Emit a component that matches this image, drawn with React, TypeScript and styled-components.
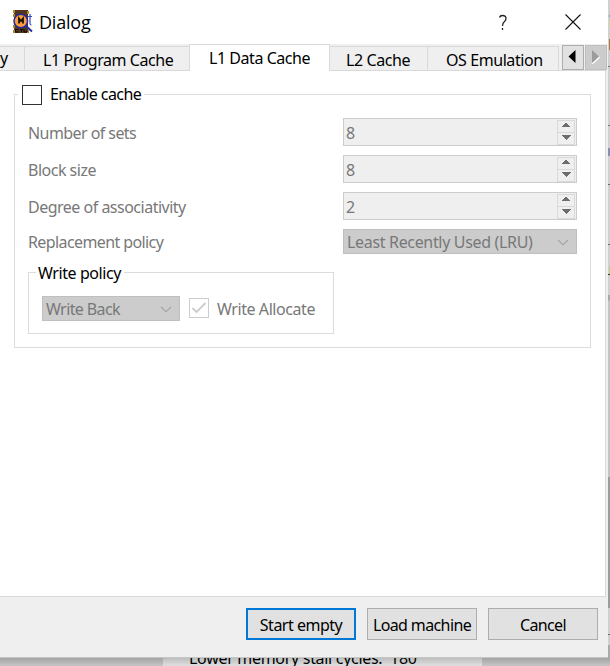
import React from "react";
import styled, { createGlobalStyle, css } from "styled-components";

const GlobalStyle = createGlobalStyle`
  *, *::before, *::after { box-sizing: border-box; }
  body { margin: 0; overflow: hidden; background: #c4c4c4; }
`;

const Desktop = styled.div`
  display: grid;
  grid-template-columns: 608px 2px;
  grid-template-rows: 658px 8px;
  width: 610px;
  height: 666px;
  overflow: hidden;
  font: 16px/22px "Noto Sans", sans-serif;
  color: #000;
`;

const Window = styled.main`
  display: flex;
  flex-direction: column;
  background: #efefef;
`;

const Text = styled.span<{ $track?: number }>`
  white-space: pre;
  letter-spacing: ${({ $track = -0.5 }) => $track}px;
`;

const TitleBar = styled.header`
  display: flex;
  align-items: center;
  height: 44px;
  padding: 0 27px 0 12px;
  background: #fff;
`;

const Title = styled.h1`
  flex: 1;
  margin: 0 0 0 5px;
  font: 400 18px/24px "Open Sans", sans-serif;
  letter-spacing: -0.2px;
`;

const TitleButton = styled.button`
  display: flex;
  padding: 0;
  border: 0;
  background: none;
  & + & { margin-left: 57px; }
`;

const TabBar = styled.nav`
  display: flex;
  align-items: flex-end;
  height: 27px;
  background: linear-gradient(#d9d9d9, #d9d9d9) 0 100% / 606px 1px no-repeat, #efefef;
`;

const Tab = styled.div<{ $width: number; $inset: number; $active?: boolean }>`
  width: ${({ $width }) => $width}px;
  height: 25px;
  padding: 2px 0 0 ${({ $inset }) => $inset}px;
  border: 1px solid #d9d9d9;
  border-left: 0;
  overflow: hidden;
  ${({ $active }) =>
    $active &&
    css`
      height: 27px;
      border-left: 1px solid #d9d9d9;
      border-bottom: 0;
      margin-left: -1px;
      background: #fff;
    `}
`;

const ScrollButton = styled.button<{ $disabled?: boolean }>`
  display: flex;
  align-items: center;
  justify-content: center;
  width: 22px;
  height: 25px;
  margin: 0 0 1px ${({ $disabled }) => ($disabled ? 1 : 3)}px;
  padding: 0 2px 2px 0;
  border: 1px solid ${({ $disabled }) => ($disabled ? "#bfbfbf" : "#adadad")};
  background: ${({ $disabled }) => ($disabled ? "#ccc" : "#e1e1e1")};
`;

const Pane = styled.section`
  width: 606px;
  height: 526px;
  padding: 23px 14px 0;
  border: solid #d9d9d9;
  border-width: 0 1px 1px 0;
  background: #fff;
`;

const CacheGroup = styled.div`
  position: relative;
  width: 577px;
  height: 254px;
  padding: 23px 13px 0;
  border: 1px solid #dcdcdc;
`;

const Legend = styled.label<{ $left: number; $top: number; $width: number; $pad: number }>`
  position: absolute;
  top: ${({ $top }) => $top}px;
  left: ${({ $left }) => $left}px;
  display: flex;
  align-items: flex-end;
  gap: 8px;
  width: ${({ $width }) => $width}px;
  padding-left: ${({ $pad }) => $pad}px;
  background: #fff;
`;

const CheckBox = styled.span<{ $disabled?: boolean }>`
  display: flex;
  align-items: center;
  justify-content: center;
  flex: none;
  width: 20px;
  height: 20px;
  border: 1px solid ${({ $disabled }) => ($disabled ? "#ccc" : "#333")};
  background: #fff;
`;

const Form = styled.div`
  display: grid;
  grid-template-columns: 315px 234px;
  grid-template-rows: 28px 28px 28px 25px;
  row-gap: 9px;
  align-items: center;
  color: #787878;
`;

const FieldLabel = styled(Text)`
  padding-top: 2px;
`;

const SpinBox = styled.div`
  display: flex;
  align-items: center;
  justify-content: space-between;
  height: 28px;
  padding: 1px 1px 1px 2px;
  border: 1px solid #ccc;
  background: #efefef;
`;

const SpinButtons = styled.div`
  display: grid;
  grid-template-rows: 12px 11px;
  width: 18px;
  border: 1px solid #d9d9d9;
  svg { display: block; }
  > :first-child { border-bottom: 1px solid #d9d9d9; }
`;

const ComboBox = styled.div<{ $width: number }>`
  display: flex;
  align-items: center;
  justify-content: space-between;
  width: ${({ $width }) => $width}px;
  height: 25px;
  padding: 1px 7px 0 3px;
  border: 1px solid #bfbfbf;
  background: #ccc;
  color: #787878;
`;

const WriteGroup = styled.div`
  position: relative;
  display: flex;
  align-items: flex-start;
  width: 306px;
  height: 62px;
  margin-top: 18px;
  padding: 23px 0 0 13px;
  border: 1px solid #dcdcdc;
`;

const CheckRow = styled.label`
  display: flex;
  align-items: center;
  gap: 8px;
  height: 24px;
  margin-left: 9px;
  color: #787878;
`;

const Footer = styled.footer`
  display: flex;
  justify-content: flex-end;
  gap: 11px;
  flex: 1;
  padding: 11px 10px 0;
  border-bottom: 1px solid #c6c6c6;
`;

const PushButton = styled.button<{ $primary?: boolean }>`
  width: 110px;
  height: 32px;
  padding: 1px 0 0;
  border: ${({ $primary }) => ($primary ? "2px solid #0078d7" : "1px solid #adadad")};
  background: #e1e1e1;
  color: #000;
  font: inherit;
`;

const EdgeStrip = styled.div`
  background:
    linear-gradient(#68a7d8, #68a7d8) 1px 15px / 1px 2px no-repeat,
    linear-gradient(#d5d69a, #d5d69a) 1px 19px / 1px 7px no-repeat,
    linear-gradient(#a77b43, #a77b43) 1px 39px / 1px 11px no-repeat,
    linear-gradient(#777, #777) 0 66px / 2px 1px no-repeat,
    linear-gradient(#777, #777) 0 125px / 2px 1px no-repeat,
    linear-gradient(#8490b8, #8490b8) 0 148px / 2px 8px no-repeat,
    linear-gradient(#666, #666) 0 184px / 2px 1px no-repeat,
    linear-gradient(#666, #666) 0 244px / 2px 1px no-repeat,
    linear-gradient(#c6c886, #c6c886) 1px 266px / 1px 8px no-repeat,
    linear-gradient(#333, #333) 0 274px / 2px 1px no-repeat,
    linear-gradient(#666, #666) 0 634px / 2px 1px no-repeat,
    linear-gradient(#d0d0d0 0 295px, #a8a8a8 295px 299px, #c4c4c4 302px 477px, #9c9c9c 477px 608px, #d0d0d0 608px 645px, #aaa 645px);
`;

const Behind = styled.div`
  display: grid;
  grid-column: 1 / 3;
  grid-template-columns: 163px 319px 1fr;
  height: 8px;
`;

const BehindPanel = styled.div<{ $light?: boolean }>`
  overflow: hidden;
  background: ${({ $light }) =>
    $light ? "linear-gradient(#bdbdbd, #dcdcdc 7px)" : "linear-gradient(#a3a3a3, #c2c2c2 7px)"};
`;

const StallText = styled.div`
  margin: -11px 0 0 26px;
  white-space: pre;
  letter-spacing: -0.3px;
`;

const AppIcon = () => (
  <svg width="22" height="24" viewBox="0 0 22 24">
    <path d="M2 0h14v23H2z" fill="#54351d" />
    <path d="M1 0h2v3H1zM1 4h2v3H1zM1 15h2v3H1zM1 20h2v3H1zM15 1h2v3h-2zM15 20h2v3h-2z" fill="#a88c2e" />
    <path d="M14 16l6 5.500" stroke="#202aa8" strokeWidth="2" />
    <circle cx="8.800" cy="11" r="6.800" fill="#ff9d3b" stroke="#202aa8" strokeWidth="1.500" />
    <path d="M7 13.500V8.500L9 11L11 8.500v5" fill="none" stroke="#17100a" strokeWidth="1.800" />
    <path d="M3.500 19.500h3m-3 0v2.500h3M8 19.500h3M9.500 19.500V22M12 19v3h3v-2" fill="none" stroke="#120b06" />
    <path d="M18 4v9.500q0 1.500 1.500 1.500M16 6.500h4" fill="none" stroke="#3b46c4" strokeWidth="1.200" />
  </svg>
);

const Chevron = () => (
  <svg width="12" height="7" viewBox="0 0 12 7">
    <path d="M1 .8l5 5 5-5" fill="none" stroke="#a0a0a0" strokeWidth="1.100" />
  </svg>
);

const Spinner = ({ value }: { value: string }) => (
  <SpinBox>
    <FieldLabel>{value}</FieldLabel>
    <SpinButtons>
      <svg width="16" height="12" viewBox="0 0 16 12" shapeRendering="crispEdges">
        <path d="M3 7L8 2L13 7z" fill="#6d6d6d" />
      </svg>
      <svg width="16" height="11" viewBox="0 0 16 11" shapeRendering="crispEdges">
        <path d="M3 2L8 7L13 2z" fill="#6d6d6d" />
      </svg>
    </SpinButtons>
  </SpinBox>
);

export default function App() {
  return (
    <Desktop>
      <GlobalStyle />
      <Window>
        <TitleBar>
          <AppIcon />
          <Title>Dialog</Title>
          <TitleButton aria-label="Help">
            <svg width="10" height="17" viewBox="0 0 10 17">
              <path d="M1.500 3.500Q2 1.500 4.500 1.500Q8 1.500 8 4.500Q8 6 6.500 7.500Q4.500 9 4.500 12M4.500 14v2" fill="none" stroke="#222" strokeWidth="1.300" />
            </svg>
          </TitleButton>
          <TitleButton aria-label="Close">
            <svg width="16" height="16" viewBox="0 0 16 16">
              <path d="M.5.5l15 15M15.500.5l-15 15" stroke="#111" strokeWidth="1.100" />
            </svg>
          </TitleButton>
        </TitleBar>
        <TabBar>
          <Tab $width={25} $inset={-1}><Text>y</Text></Tab>
          <Tab $width={165} $inset={18}><Text $track={-0.43}>L1 Program Cache</Text></Tab>
          <Tab $width={141} $inset={19} $active><Text $track={-0.45}>L1 Data Cache</Text></Tab>
          <Tab $width={98} $inset={16}><Text $track={-0.4}>L2 Cache</Text></Tab>
          <Tab $width={131} $inset={18}><Text $track={-0.42}>OS Emulation</Text></Tab>
          <ScrollButton>
            <svg width="8" height="13" viewBox="0 0 8 13"><path d="M7.500 0v13L.5 6.500z" /></svg>
          </ScrollButton>
          <ScrollButton $disabled>
            <svg width="9" height="14" viewBox="0 0 9 14">
              <path d="M1 14l7.500-7" stroke="#fff" strokeWidth="1.500" />
              <path d="M1 0v13l7-6.500z" fill="#9b9b9b" />
            </svg>
          </ScrollButton>
        </TabBar>
        <Pane>
          <CacheGroup>
            <Legend $left={3} $top={-12} $width={126} $pad={4}>
              <CheckBox />
              <Text $track={-0.58}>Enable cache</Text>
            </Legend>
            <Form>
              <FieldLabel $track={-0.57}>Number of sets</FieldLabel>
              <Spinner value="8" />
              <FieldLabel>Block size</FieldLabel>
              <Spinner value="8" />
              <FieldLabel>Degree of associativity</FieldLabel>
              <Spinner value="2" />
              <Text $track={-0.6}>Replacement policy</Text>
              <ComboBox $width={234}>
                <Text $track={-0.33}>Least Recently Used (LRU)</Text>
                <Chevron />
              </ComboBox>
            </Form>
            <WriteGroup>
              <Legend as="div" $left={7} $top={-11} $width={88} $pad={2}>
                <Text $track={-0.42}>Write policy</Text>
              </Legend>
              <ComboBox $width={138}>
                <Text $track={-0.6}>Write Back</Text>
                <Chevron />
              </ComboBox>
              <CheckRow>
                <CheckBox $disabled>
                  <svg width="16" height="12" viewBox="0 0 16 12">
                    <path d="M1.500 6l4 4L14.500 1" fill="none" stroke="#ccc" strokeWidth="1.800" />
                  </svg>
                </CheckBox>
                <FieldLabel $track={-0.43}>Write Allocate</FieldLabel>
              </CheckRow>
            </WriteGroup>
          </CacheGroup>
        </Pane>
        <Footer>
          <PushButton $primary><Text>Start empty</Text></PushButton>
          <PushButton><Text $track={-0.62}>Load machine</Text></PushButton>
          <PushButton><Text $track={-0.65}>Cancel</Text></PushButton>
        </Footer>
      </Window>
      <EdgeStrip />
      <Behind>
        <BehindPanel />
        <BehindPanel $light><StallText>Lower memory stall cycles:  180</StallText></BehindPanel>
        <BehindPanel />
      </Behind>
    </Desktop>
  );
}
